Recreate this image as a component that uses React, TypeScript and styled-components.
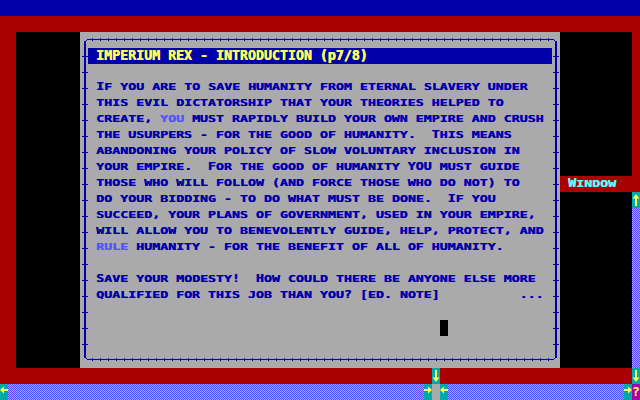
import React from 'react';
import styled, { createGlobalStyle } from 'styled-components';

const C = {
  blue: '#0000AA',
  red: '#AA0000',
  gray: '#AAAAAA',
  black: '#000000',
  yellow: '#FFFF55',
  cyan: '#00AAAA',
  lblue: '#5555FF',
  lcyan: '#55FFFF',
  magenta: '#AA00AA',
};

const Global = createGlobalStyle`
  html, body { margin: 0; padding: 0; background: #000; }
  body { font-family: "DejaVu Sans Mono", "Liberation Mono", monospace; }
`;

const Screen = styled.div`
  position: relative;
  width: 640px;
  height: 400px;
  display: flex;
  flex-direction: column;
  overflow: hidden;
`;

const TopBar = styled.div`
  flex: none;
  height: 16px;
  background: ${C.blue};
`;

const Middle = styled.div`
  flex: none;
  display: flex;
  height: 368px;
`;

const Desk = styled.div`
  width: 632px;
  display: flex;
  flex-direction: column;
  background: ${C.red};
`;

const Strip = styled.div`
  height: 16px;
  display: flex;
`;

const Work = styled.div`
  height: 336px;
  display: flex;
  padding-left: 16px;
`;

const Void = styled.div<{ $w: number }>`
  width: ${(p) => p.$w}px;
  background: ${C.black};
`;

const Panel = styled.div`
  position: relative;
  box-sizing: border-box;
  width: 480px;
  background: ${C.gray};
  padding: 16px 8px 0;
`;

const TitleBar = styled.div`
  height: 16px;
  line-height: 16px;
  padding-left: 8px;
  background: ${C.blue};
  color: ${C.yellow};
  font-size: 13.2877px;
  font-weight: bold;
  white-space: pre;
  text-shadow: 0.6px 0 0 currentColor;
`;

const Body = styled.div`
  margin-top: 16px;
  padding-left: 8px;
  color: ${C.blue};
  font-size: 13.2877px;
  font-weight: bold;
  text-shadow: 0.5px 0 0 currentColor;
`;

const Line = styled.div`
  height: 16px;
  line-height: 16px;
  white-space: pre;
`;

const Run = styled.span<{ $s: number; $dy: number; $c?: string; $small?: boolean }>`
  display: inline-block;
  white-space: pre;
  color: ${(p) => p.$c ?? 'inherit'};
  text-transform: ${(p) => (p.$small ? 'uppercase' : 'none')};
  transform-origin: 50% 12.5px;
  transform: translateY(${(p) => p.$dy}px) scaleY(${(p) => p.$s});
`;

const Cursor = styled.div<{ $col: number }>`
  width: 8px;
  height: 16px;
  margin-left: ${(p) => p.$col * 8}px;
  background: ${C.black};
`;

const FrameSvg = styled.svg`
  position: absolute;
  left: 0;
  top: 0;
  pointer-events: none;
`;

const ScrollColumn = styled.div`
  width: 8px;
  display: flex;
  flex-direction: column;
`;

const RedFill = styled.div<{ $h: number }>`
  height: ${(p) => p.$h}px;
  background: ${C.red};
`;

const CheckerBox = styled.div<{ $w?: number }>`
  ${(p) => (p.$w ? `width: ${p.$w}px; flex: none;` : 'flex: 1;')}
  position: relative;
  overflow: hidden;
  background: ${C.gray};
  & > svg {
    display: block;
    width: 100%;
    height: 100%;
  }
`;

const BottomBar = styled.div`
  flex: none;
  height: 16px;
  display: flex;
`;

const Cell = styled.div<{ $bg: string; $ml?: number }>`
  flex: none;
  width: 8px;
  height: 16px;
  margin-left: ${(p) => p.$ml ?? 0}px;
  background: ${(p) => p.$bg};
  display: flex;
  align-items: center;
  justify-content: center;
`;

const HelpGlyph = styled.span`
  color: ${C.yellow};
  font-family: "DejaVu Sans Mono", monospace;
  font-weight: bold;
  font-size: 13px;
  line-height: 16px;
`;

const WindowTab = styled.div`
  position: absolute;
  left: 560px;
  top: 176px;
  width: 80px;
  height: 16px;
  box-sizing: border-box;
  padding-left: 8px;
  background: ${C.red};
  color: ${C.lcyan};
  font-size: 13.2877px;
  font-weight: bold;
  line-height: 16px;
  white-space: pre;
  text-shadow: 0.5px 0 0 currentColor;
`;

const Checker: React.FC<{ w?: number }> = ({ w }) => {
  const id = React.useId().replace(/:/g, '');
  return (
    <CheckerBox $w={w}>
      <svg shapeRendering="crispEdges">
        <defs>
          <pattern id={`chk${id}`} x="0" y="0" width="2" height="2" patternUnits="userSpaceOnUse">
            <rect x="0" y="0" width="1" height="1" fill={C.lblue} />
            <rect x="1" y="1" width="1" height="1" fill={C.lblue} />
          </pattern>
        </defs>
        <rect width="100%" height="100%" fill={`url(#chk${id})`} />
      </svg>
    </CheckerBox>
  );
};

type Dir = 'up' | 'down' | 'left' | 'right';
const ARROWS: Record<Dir, string> = {
  up: '4,2 7.5,6.5 5,6.5 5,14 3,14 3,6.5 0.5,6.5',
  down: '4,14 7.5,9.5 5,9.5 5,2 3,2 3,9.5 0.5,9.5',
  left: '0,6 4,2.5 4,5 8,5 8,7 4,7 4,9.5',
  right: '8,6 4,2.5 4,5 0,5 0,7 4,7 4,9.5',
};

const Arrow: React.FC<{ dir: Dir; ml?: number }> = ({ dir, ml }) => (
  <Cell $bg={C.cyan} $ml={ml}>
    <svg width="8" height="16" viewBox="0 0 8 16">
      <polygon points={ARROWS[dir]} fill={C.yellow} />
    </svg>
  </Cell>
);

function renderRuns(text: string, big: number, small: number, dy: number, keyBase: string) {
  const out: React.ReactNode[] = [];
  const parts = text.split(/(\{[^}]*\})/);
  parts.forEach((part, pi) => {
    if (!part) return;
    let color: string | undefined;
    let t = part;
    if (part.startsWith('{')) {
      color = C.lblue;
      t = part.slice(1, -1);
    }
    const re = /[a-z]+|[^a-z]+/g;
    let m: RegExpExecArray | null;
    let i = 0;
    while ((m = re.exec(t))) {
      const isSmall = /[a-z]/.test(m[0][0]);
      out.push(
        <Run key={`${keyBase}-${pi}-${i++}`} $s={isSmall ? small : big} $dy={dy} $c={color} $small={isSmall}>
          {m[0]}
        </Run>
      );
    }
  });
  return out;
}

const LINES = [
  'If you are to save humanity from eternal slavery under',
  'this evil dictatorship that your theories helped to',
  'create, {you} must rapidly build your own empire and crush',
  'the usurpers - for the good of humanity.  This means',
  'abandoning your policy of slow voluntary inclusion in',
  'your empire.  For the good of humanity YOU must guide',
  'those who will follow (and force those who do not) to',
  'do your bidding - to do what must be done.  If you',
  'succeed, your plans of government, used in your empire,',
  'will allow you to benevolently guide, help, protect, and',
  '{rule} humanity - for the benefit of all of humanity.',
  '',
  'Save your modesty!  How could there be anyone else more',
  'qualified for this job than you? [ed. note]          ...',
  '',
];

const Frame: React.FC = () => {
  const hTicks: number[] = [];
  for (let x = 12; x <= 468; x += 8) hTicks.push(x);
  const vTicks: number[] = [];
  for (let y = 24; y <= 312; y += 16) vTicks.push(y);
  return (
    <FrameSvg width="480" height="336" viewBox="0 0 480 336" shapeRendering="crispEdges">
      <g fill={C.blue}>
        <rect x="4" y="9" width="2" height="317" />
        <rect x="475" y="9" width="2" height="317" />
        <rect x="7" y="7" width="467" height="1" />
        <rect x="7" y="327" width="467" height="1" />
        <rect x="6" y="8" width="1" height="1" />
        <rect x="474" y="8" width="1" height="1" />
        <rect x="6" y="326" width="1" height="1" />
        <rect x="474" y="326" width="1" height="1" />
        {hTicks.map((x) => (
          <React.Fragment key={`h${x}`}>
            <rect x={x} y="6" width="1" height="3" />
            <rect x={x} y="326" width="1" height="3" />
          </React.Fragment>
        ))}
        {vTicks.map((y) => (
          <React.Fragment key={`v${y}`}>
            <rect x="2" y={y} width="6" height="1" />
            <rect x="473" y={y} width="6" height="1" />
          </React.Fragment>
        ))}
      </g>
    </FrameSvg>
  );
};

export default function App() {
  return (
    <>
      <Global />
      <Screen>
        <TopBar />
        <Middle>
          <Desk>
            <Strip />
            <Work>
              <Void $w={64} />
              <Panel>
                <TitleBar>IMPERIUM REX - INTRODUCTION (p7/8)</TitleBar>
                <Body>
                  {LINES.map((l, i) => (
                    <Line key={i}>{renderRuns(l, 0.826, 0.62, -2.5, `l${i}`)}</Line>
                  ))}
                  <Cursor $col={43} />
                </Body>
                <Frame />
              </Panel>
              <Void $w={72} />
            </Work>
            <Strip>
              <Arrow dir="down" ml={432} />
            </Strip>
          </Desk>
          <ScrollColumn>
            <RedFill $h={176} />
            <Arrow dir="up" />
            <Checker />
            <Arrow dir="down" />
          </ScrollColumn>
        </Middle>
        <BottomBar>
          <Arrow dir="left" />
          <Checker w={416} />
          <Arrow dir="right" />
          <Cell $bg={C.gray} />
          <Arrow dir="left" />
          <Checker />
          <Arrow dir="right" />
          <Cell $bg={C.magenta}>
            <HelpGlyph>?</HelpGlyph>
          </Cell>
        </BottomBar>
        <WindowTab>{renderRuns('Window', 0.93, 0.72, -1.5, 'w')}</WindowTab>
      </Screen>
    </>
  );
}
